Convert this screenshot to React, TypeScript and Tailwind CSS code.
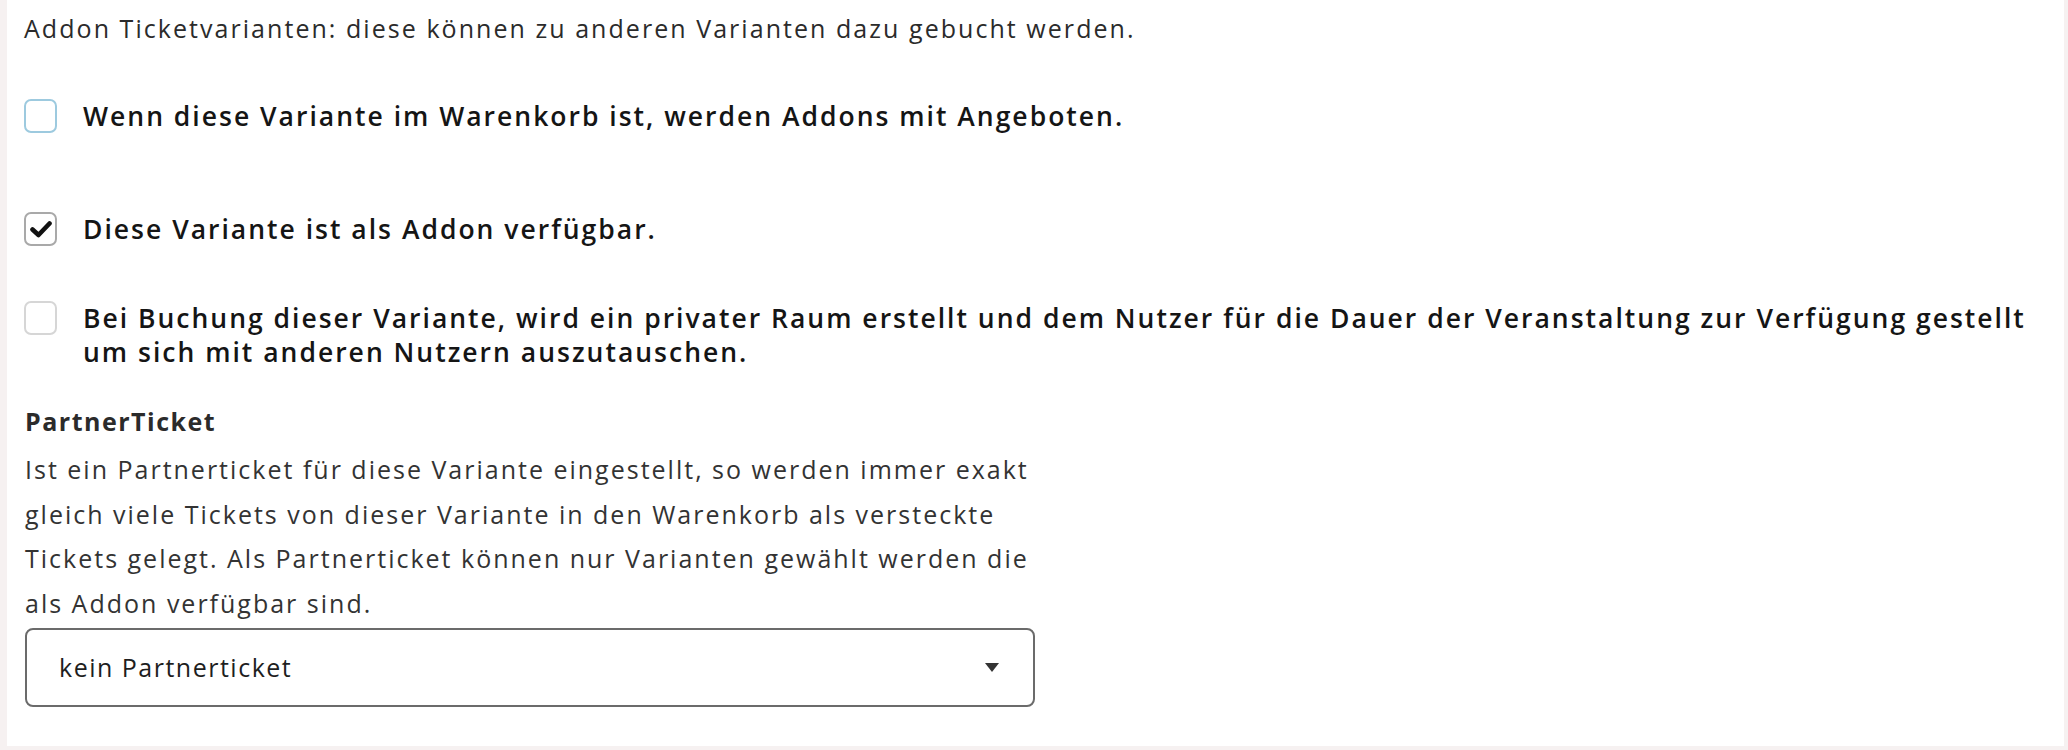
import React from "react";

const font = { fontFamily: '"Open Sans", "Liberation Sans", sans-serif' };

function Box({ variant }: { variant: "focus" | "checked" | "plain" }) {
  const cls =
    variant === "focus"
      ? "border-[#9dcadf]"
      : variant === "checked"
      ? "border-[#a9a9a9]"
      : "border-[#d6d6d6]";
  return (
    <div
      className={`w-[33px] h-[34px] shrink-0 rounded-[7px] border-2 bg-white flex items-center justify-center ${cls}`}
    >
      {variant === "checked" && (
        <svg width="22" height="18" viewBox="0 0 22 18">
          <path
            d="M2.5 9.5 L8.5 15 L19.5 3.5"
            fill="none"
            stroke="#111"
            strokeWidth="4.6"
            strokeLinecap="round"
            strokeLinejoin="round"
          />
        </svg>
      )}
    </div>
  );
}

export default function App() {
  return (
    <div className="min-h-[750px] bg-[#f6f1f1] pl-[7px] pr-[4px] pb-[7px]" style={font}>
      <div className="bg-white pl-[17px] pr-[24px] pt-[11px] pb-[39px] text-[#2b2b2b]">
        <div className="text-[25px] leading-[34px] tracking-[2.05px] whitespace-nowrap">
          Addon Ticketvarianten: diese können zu anderen Varianten dazu gebucht werden.
        </div>

        <div className="mt-[54px] flex items-center gap-[26px]">
          <Box variant="focus" />
          <div className="text-[26.5px] leading-[34px] tracking-[2px] font-semibold text-[#151515] whitespace-nowrap">
            Wenn diese Variante im Warenkorb ist, werden Addons mit Angeboten.
          </div>
        </div>

        <div className="mt-[79px] flex items-center gap-[26px]">
          <Box variant="checked" />
          <div className="text-[26.5px] leading-[34px] tracking-[2px] font-semibold text-[#151515] whitespace-nowrap">
            Diese Variante ist als Addon verfügbar.
          </div>
        </div>

        <div className="mt-[55px] flex items-start gap-[26px]">
          <Box variant="plain" />
          <div className="text-[26.5px] leading-[34px] tracking-[2px] font-semibold text-[#151515] whitespace-nowrap">
            <div>Bei Buchung dieser Variante, wird ein privater Raum erstellt und dem Nutzer für die Dauer der Veranstaltung zur Verfügung gestellt</div>
            <div>um sich mit anderen Nutzern auszutauschen.</div>
          </div>
        </div>

        <div className="mt-[35px] w-[1011px] pl-[1px]">
          <div className="text-[25px] leading-[34px] tracking-[1.5px] font-bold text-[#2b2b2b]">PartnerTicket</div>
          <div className="mt-[9px] text-[25px] leading-[44.7px] tracking-[2px] text-[#333] whitespace-nowrap">
            <div>Ist ein Partnerticket für diese Variante eingestellt, so werden immer exakt</div>
            <div>gleich viele Tickets von dieser Variante in den Warenkorb als versteckte</div>
            <div>Tickets gelegt. Als Partnerticket können nur Varianten gewählt werden die</div>
            <div>als Addon verfügbar sind.</div>
          </div>
          <div className="mt-[2px] h-[79px] rounded-[8px] border-2 border-[#6b6b6b] flex items-center justify-between pl-[32px] pr-[34px]">
            <span className="text-[25px] tracking-[1.5px] font-medium text-[#1e1e1e]">kein Partnerticket</span>
            <svg width="14" height="9" viewBox="0 0 14 9">
              <path d="M0 0 L14 0 L7 9 Z" fill="#333" />
            </svg>
          </div>
        </div>
      </div>
    </div>
  );
}
